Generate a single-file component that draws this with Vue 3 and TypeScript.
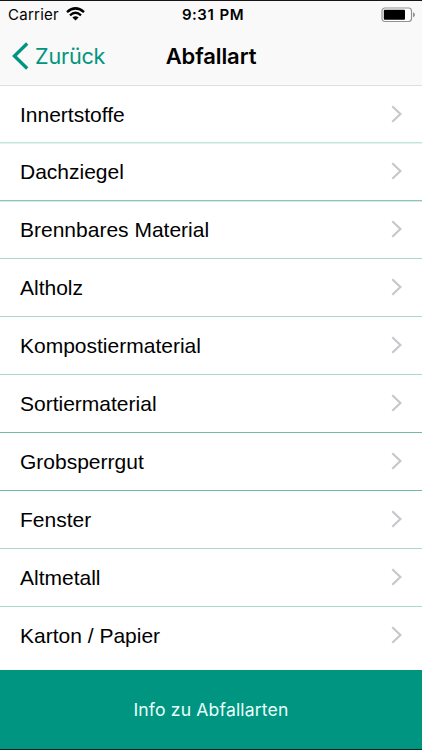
<script setup lang="ts">
interface WasteType {
  label: string
  tone: 'soft' | 'medium' | 'strong' | 'light' | 'none'
}

const types: WasteType[] = [
  { label: 'Innertstoffe', tone: 'soft' },
  { label: 'Dachziegel', tone: 'medium' },
  { label: 'Brennbares Material', tone: 'light' },
  { label: 'Altholz', tone: 'light' },
  { label: 'Kompostiermaterial', tone: 'light' },
  { label: 'Sortiermaterial', tone: 'strong' },
  { label: 'Grobsperrgut', tone: 'strong' },
  { label: 'Fenster', tone: 'light' },
  { label: 'Altmetall', tone: 'light' },
  { label: 'Karton / Papier', tone: 'none' },
]
</script>

<template>
  <div class="screen">
    <header class="top">
      <div class="status">
        <div class="network">
          <span class="carrier">Carrier</span>
          <svg class="wifi" width="19" height="14" viewBox="0 0 19 14">
            <path d="M1 5.1Q9.5-2.3 18 5.1" fill="none" stroke="#000" stroke-width="2.5" />
            <path d="M4 8.3Q9.5 3.3 15 8.3" fill="none" stroke="#000" stroke-width="2.3" />
            <path d="M6.4 10.6Q9.5 7.8 12.6 10.6L9.5 13.6Z" fill="#000" />
          </svg>
        </div>
        <span class="time">9:31 PM</span>
        <div class="power">
          <svg width="35" height="16" viewBox="0 0 35 16">
            <rect x="1" y="1" width="29.5" height="13.5" rx="3" fill="#fff" stroke="#929292" stroke-width="1.2" />
            <rect x="2.8" y="2.8" width="21.2" height="9.9" rx="1" fill="#000" />
            <path d="M32 5.3Q34 6 34 7.8T32 10.2Z" fill="#929292" />
          </svg>
        </div>
      </div>
      <nav class="nav">
        <a class="back">
          <svg width="17" height="28" viewBox="0 0 17 28">
            <path d="M15.2 1.5L2.4 14L15.2 26.5" fill="none" stroke="#009580" stroke-width="3.3" />
          </svg>
          <span class="back-label">Zurück</span>
        </a>
        <h1 class="title">Abfallart</h1>
      </nav>
    </header>
    <ul class="list">
      <li v-for="t in types" :key="t.label" class="row" :class="t.tone">
        <span class="label">{{ t.label }}</span>
        <svg class="chevron" width="12" height="18" viewBox="0 0 12 18">
          <path d="M1.3 1.2L9.4 9L1.3 16.8" fill="none" stroke="#c7c7cc" stroke-width="2.2" />
        </svg>
      </li>
    </ul>
    <button class="info"><span class="info-label">Info zu Abfallarten</span></button>
  </div>
</template>

<style>
body {
  margin: 0;
}
</style>

<style scoped>
.screen {
  display: flex;
  flex-direction: column;
  box-sizing: border-box;
  width: 422px;
  height: 750px;
  border-top: 1px solid #161616;
  border-bottom: 1px solid #07251f;
  background: #fff;
  color: #000;
  font-family: Inter, "Liberation Sans", sans-serif;
  overflow: hidden;
}
.top {
  box-sizing: border-box;
  height: 85px;
  flex: none;
  background: #f9f9f9;
  border-bottom: 1px solid #dedede;
}
.status {
  display: grid;
  grid-template-columns: 1fr auto 1fr;
  align-items: center;
  height: 27px;
  padding: 0 6px 0 8px;
}
.network {
  display: flex;
  align-items: center;
  gap: 7px;
}
.wifi {
  margin-bottom: 1px;
}
.carrier {
  font-size: 15px;
  letter-spacing: 0.25px;
}
.time {
  font-size: 15px;
  font-weight: 600;
  letter-spacing: 0.5px;
  word-spacing: 1px;
  padding-left: 2px;
}
.power {
  display: flex;
  justify-content: flex-end;
}
.nav {
  display: grid;
  grid-template-columns: 1fr auto 1fr;
  align-items: center;
  height: 56px;
}
.back {
  display: flex;
  align-items: center;
  gap: 6px;
  padding-left: 12px;
  color: #009580;
}
.back-label {
  font-size: 21.6px;
  letter-spacing: -0.2px;
}
.title {
  margin: 0;
  font-size: 22px;
  font-weight: 600;
  letter-spacing: -0.1px;
}
.list {
  display: flex;
  flex-direction: column;
  height: 584px;
  margin: 0;
  padding: 0;
  list-style: none;
}
.row {
  display: flex;
  align-items: center;
  justify-content: space-between;
  box-sizing: border-box;
  height: 58px;
  padding: 0 19px 0 20px;
  border-bottom: 1px solid #a9d8ca;
}
.row:first-child {
  height: 57px;
}
.soft {
  border-bottom-color: #c2e6df;
  box-shadow: 0 1px 0 #e0f4f0;
}
.medium {
  border-bottom-color: #8ac5b9;
  box-shadow: 0 1px 0 #d5ece7;
}
.strong {
  border-bottom-color: #72b9a9;
}
.none {
  border-bottom-color: transparent;
}
.label {
  padding-top: 1px;
  font-family: "Liberation Sans", sans-serif;
  font-size: 21px;
}
.chevron {
  margin-bottom: 1px;
}
.info {
  height: 79px;
  flex: none;
  border: 0;
  padding: 0;
  background: #009580;
  color: #e9fffb;
  font-family: Inter, sans-serif;
  font-size: 17.6px;
  letter-spacing: 0.15px;
}
</style>
